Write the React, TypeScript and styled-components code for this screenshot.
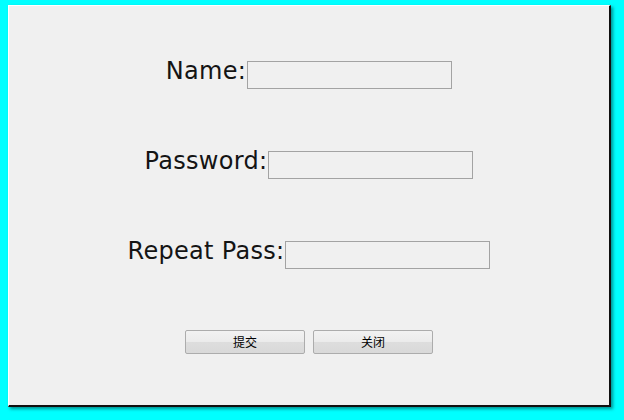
import React from 'react'
import styled, { createGlobalStyle } from 'styled-components'

const GlobalStyle = createGlobalStyle`
  html, body {
    margin: 0;
    padding: 0;
    background: #00ffff;
  }
  body {
    width: 624px;
    height: 420px;
    overflow: hidden;
  }
`

const Panel = styled.div`
  box-sizing: border-box;
  width: 603px;
  height: 402px;
  margin: 5px 0 0 8px;
  background: #f0f0f0;
  border-top: 1px solid #ffffff;
  border-left: 1px solid #ffffff;
  border-right: 2px solid #101010;
  border-bottom: 2px solid #101010;
  box-shadow: 2px 2px 3px rgba(0, 40, 40, 0.5);
  display: flex;
  flex-direction: column;
  align-items: center;
  padding-top: 55px;
`

const Row = styled.div`
  display: flex;
  align-items: flex-start;
  margin-bottom: 62px;
`

const Label = styled.label`
  font-family: 'DejaVu Sans', Verdana, sans-serif;
  font-size: 24px;
  line-height: 20px;
  letter-spacing: 0.3px;
  color: #141414;
  white-space: nowrap;
  padding-right: 1px;
`

const Field = styled.input`
  box-sizing: border-box;
  width: 205px;
  height: 28px;
  margin: 0;
  padding: 0 3px;
  border: 1px solid #a3a3a3;
  background: #f0f0f0;
  outline: none;
  font-family: 'DejaVu Sans', sans-serif;
  font-size: 13px;
`

const ButtonBar = styled.div`
  display: flex;
  gap: 8px;
  margin-top: -1px;
`

const Button = styled.button`
  box-sizing: border-box;
  width: 120px;
  height: 24px;
  margin: 0;
  padding: 0;
  border: 1px solid #acacac;
  border-radius: 2px;
  background: linear-gradient(#f2f2f2, #ebebeb 50%, #dddddd 51%, #d9d9d9);
  font-family: 'Noto Sans CJK SC', 'DejaVu Sans', sans-serif;
  font-size: 12px;
  line-height: 22px;
  color: #000;
`

export default function App() {
  return (
    <>
      <GlobalStyle />
      <Panel>
        <Row>
          <Label>Name:</Label>
          <Field type="text" />
        </Row>
        <Row>
          <Label>Password:</Label>
          <Field type="password" />
        </Row>
        <Row>
          <Label>Repeat Pass:</Label>
          <Field type="password" />
        </Row>
        <ButtonBar>
          <Button>提交</Button>
          <Button>关闭</Button>
        </ButtonBar>
      </Panel>
    </>
  )
}
